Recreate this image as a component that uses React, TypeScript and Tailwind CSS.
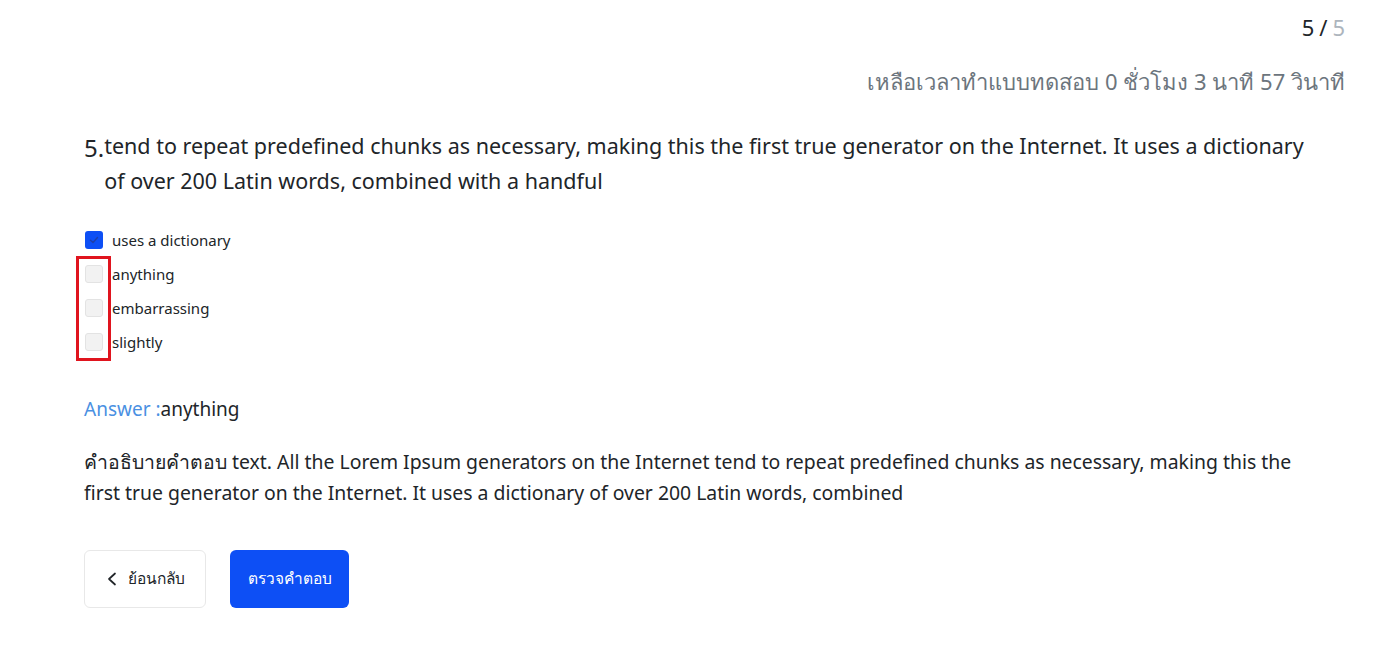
import React, { useState } from 'react';

const options = ['uses a dictionary', 'anything', 'embarrassing', 'slightly'];

export default function App() {
    const [checked, setChecked] = useState<string[]>(['uses a dictionary']);

    const toggle = (o: string) =>
        setChecked((c) => (c.includes(o) ? c.filter((x) => x !== o) : [...c, o]));

    return (
        <div className="min-h-screen bg-white text-[#212529]" style={{ fontFamily: '"Noto Sans", sans-serif' }}>
            <div className="px-[84px] pr-[55px] pt-[12px]">
                <div className="flex justify-end text-[22px] leading-[30px]">
                    <span className="text-[#212529]">5</span>
                    <span className="mx-[5px] text-[#212529]">/</span>
                    <span className="text-[#adb5bd]">5</span>
                </div>
                <div className="mt-[23px] flex justify-end text-[22px] leading-[32px] text-[#6c757d]">
                    เหลือเวลาทำแบบทดสอบ 0 ชั่วโมง 3 นาที 57 วินาที
                </div>

                <div className="mt-[31px] flex text-[21.5px] leading-[35px]">
                    <span className="shrink-0 pt-[2px] text-[24px]">5.</span>
                    <p className="pr-[30px]">
                        tend to repeat predefined chunks as necessary, making this the first true generator on the Internet. It uses a dictionary of over 200 Latin words, combined with a handful
                    </p>
                </div>

                <div className="mt-[25px] flex flex-col pl-[1px]">
                    <label className="flex h-[34px] items-center gap-[9px] text-[15px]">
                        <span
                            onClick={() => toggle(options[0])}
                            className="flex h-[18px] w-[18px] items-center justify-center rounded-[3px] bg-[#0d4ff5]"
                        >
                            <svg width="12" height="12" viewBox="0 0 12 12" fill="none">
                                <path d="M2.5 6.2 L5 8.5 L9.5 3.5" stroke="#1f3fa8" strokeWidth="1.4" strokeLinecap="round" strokeLinejoin="round" />
                            </svg>
                        </span>
                        {options[0]}
                    </label>
                    <div className="relative">
                        <div className="pointer-events-none absolute left-[-9px] top-[-1px] h-[105px] w-[35px] border-[3px] border-[#e0141e]" />
                        {options.slice(1).map((o) => (
                            <label key={o} className="flex h-[34px] items-center gap-[9px] text-[15px]">
                                <span
                                    onClick={() => toggle(o)}
                                    className="h-[18px] w-[18px] rounded-[3px] border border-[#e3e3e3] bg-[#f2f2f2]"
                                />
                                {o}
                            </label>
                        ))}
                    </div>
                </div>

                <div className="mt-[35px] text-[19px] leading-[30px]">
                    <span className="text-[#4a90e2]">Answer :</span>
                    <span>anything</span>
                </div>

                <p className="mt-[22px] pr-[45px] text-[19.4px] leading-[31px]">
                    คำอธิบายคำตอบ text. All the Lorem Ipsum generators on the Internet tend to repeat predefined chunks as necessary, making this the first true generator on the Internet. It uses a dictionary of over 200 Latin words, combined
                </p>

                <div className="mt-[42px] flex gap-[24px]">
                    <button className="flex h-[58px] w-[122px] items-center justify-center gap-[10px] rounded-[6px] border border-[#e8e8e8] bg-white text-[15.5px] text-[#212529]">
                        <svg width="12" height="14" viewBox="0 0 12 14" fill="none">
                            <path d="M9 1.5 L3 7 L9 12.5" stroke="#212529" strokeWidth="1.7" strokeLinecap="round" strokeLinejoin="round" />
                        </svg>
                        ย้อนกลับ
                    </button>
                    <button className="flex h-[58px] w-[119px] items-center justify-center rounded-[6px] bg-[#0d4ff5] text-[15.5px] font-medium text-white">
                        ตรวจคำตอบ
                    </button>
                </div>
            </div>
        </div>
    );
}
